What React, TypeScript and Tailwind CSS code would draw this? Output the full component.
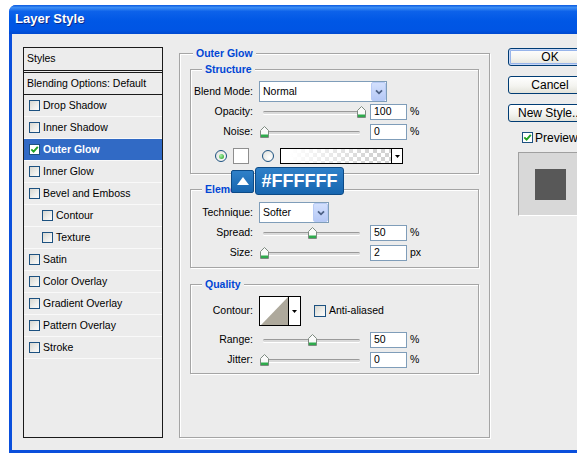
import type { ReactNode } from "react";

const ITEMS: Array<{ label: string; indent?: boolean; checked?: boolean; selected?: boolean }> = [
  { label: "Drop Shadow" },
  { label: "Inner Shadow" },
  { label: "Outer Glow", checked: true, selected: true },
  { label: "Inner Glow" },
  { label: "Bevel and Emboss" },
  { label: "Contour", indent: true },
  { label: "Texture", indent: true },
  { label: "Satin" },
  { label: "Color Overlay" },
  { label: "Gradient Overlay" },
  { label: "Pattern Overlay" },
  { label: "Stroke" },
];

function CheckBox({ checked, size = "h-[11px] w-[11px]" }: { checked?: boolean; size?: string }) {
  return (
    <span
      className={`flex flex-none items-center justify-center border border-[#1c5180] ${size} ${
        checked ? "bg-white" : "bg-[linear-gradient(135deg,#d6d6d0,#efefec_60%,#fbfbfb)]"
      }`}
    >
      {checked && (
        <svg viewBox="0 0 9 9" className="h-[9px] w-[9px]">
          <path d="M1.3 4.3 L3.6 6.6 L7.8 1.8" stroke="#21a121" strokeWidth="1.9" fill="none" />
        </svg>
      )}
    </span>
  );
}

function Radio({ on }: { on?: boolean }) {
  return (
    <span className="flex h-[12px] w-[12px] flex-none items-center justify-center rounded-full border border-[#1c5180] bg-[radial-gradient(circle_at_65%_65%,#ffffff,#dedeD8)]">
      {on && <span className="h-[5px] w-[5px] rounded-full bg-[radial-gradient(circle_at_35%_35%,#a8f0a8,#1e9e1e)]" />}
    </span>
  );
}

function Slider({ value }: { value: number }) {
  return (
    <div className="relative h-[16px] w-[107px] flex-none">
      <div className="absolute left-[4px] right-[6px] top-[7px] h-[3px] rounded-[2px] border-t border-[#9a9a9a] bg-[#dadada] shadow-[0_1px_0_#fff]" />
      <svg
        viewBox="0 0 9 12"
        className="absolute top-[2px] h-[12px] w-[9px]"
        style={{ left: 0.5 + value * 0.97 }}
      >
        <path d="M0.5 4.5 L4.5 0.5 L8.5 4.5 V11.5 H0.5 Z" fill="#fafafa" stroke="#7d8a80" />
        <rect x="1" y="8.5" width="7" height="2.5" fill="#2eab4c" />
      </svg>
    </div>
  );
}

function Num({ value, unit }: { value: string; unit?: string }) {
  return (
    <>
      <div className="ml-[4px] flex h-[16px] w-[37px] flex-none items-center border border-[#7f9db9] bg-white pl-[3px]">
        {value}
      </div>
      {unit && <span className="ml-[3px]">{unit}</span>}
    </>
  );
}

function DownTri() {
  return (
    <svg width="5" height="3" viewBox="0 0 5 3">
      <path d="M0 0 H5 L2.5 3 Z" fill="#000" />
    </svg>
  );
}

function Select({ value, width }: { value: string; width: string }) {
  return (
    <div className={`flex h-[21px] flex-none items-center justify-between border border-[#7f9db9] bg-white pl-[3px] ${width}`}>
      <span>{value}</span>
      <span className="flex h-[19px] w-[15px] items-center justify-center rounded-[2px] border border-[#b8cbf5] bg-[linear-gradient(#d3e0fd,#b6c9f6)]">
        <svg width="8" height="6" viewBox="0 0 8 6">
          <path d="M1 1.3 L4 4.3 L7 1.3" stroke="#4d6185" strokeWidth="1.8" fill="none" />
        </svg>
      </span>
    </div>
  );
}

function Row({ label, className, children }: { label: string; className: string; children: ReactNode }) {
  return (
    <div className={`flex items-center ${className}`}>
      <span className="w-[62px] flex-none text-right">{label}</span>
      <div className="ml-[6px] flex items-center">{children}</div>
    </div>
  );
}

function Group({ title, className, children }: { title: string; className: string; children: ReactNode }) {
  return (
    <fieldset
      className={`ml-[10px] w-[289px] border border-[#a5a5a5] shadow-[inset_1px_1px_0_#fff,1px_1px_0_#fff] ${className}`}
    >
      <legend className="ml-[11px] bg-[#ececec] px-[3px] text-[10.5px] font-bold leading-[13px] text-[#0046d5]">
        {title}
      </legend>
      {children}
    </fieldset>
  );
}

function Button({ children, isDefault }: { children: ReactNode; isDefault?: boolean }) {
  return (
    <div
      className={`flex h-[18px] w-[84px] items-center justify-center rounded-[3px] border border-[#003c74] bg-[linear-gradient(#ffffff,#f4f4f0_55%,#e2e2da)] text-[12px] leading-none ${
        isDefault ? "shadow-[inset_0_0_0_1px_#c6d7f7,inset_0_0_0_2px_#97b4ea]" : ""
      }`}
    >
      {children}
    </div>
  );
}

export default function App() {
  return (
    <div className="relative h-[460px] w-[577px] overflow-hidden bg-white font-['Liberation_Sans',Arial,sans-serif] text-[10.5px] text-black">
      <div className="ml-[9px] mt-[5px] flex h-[448px] w-[620px] flex-col overflow-hidden rounded-tl-[7px] bg-[#0a4fdc]">
        <div className="flex h-[29px] flex-none items-center bg-[linear-gradient(to_bottom,#0a5ae0_0%,#3d8ef4_9%,#0d62ea_22%,#0057e5_55%,#0055e4_85%,#0049d0_100%)] pb-[1px] pl-[6px] text-[13px] font-bold text-white [text-shadow:1px_1px_0_#0a2a8a]">
          Layer Style
        </div>

        <div className="mb-[3px] ml-[3px] flex flex-1 items-start bg-[#ececec] pl-[11px]">
          {/* styles list */}
          <div className="mt-[13px] h-[391px] w-[140px] flex-none border border-[#1a1a1a]">
            <div className="flex h-[25px] items-center border-b-[3px] border-double border-[#1a1a1a] pl-[3px]">
              Styles
            </div>
            <div className="flex h-[22px] items-center border-b border-[#1a1a1a] pl-[3px]">
              Blending Options: Default
            </div>
            {ITEMS.map((it) => (
              <div
                key={it.label}
                className={`flex h-[22px] items-center gap-[3px] border-b border-[#f9f9f9] ${
                  it.indent ? "pl-[18px]" : "pl-[5px]"
                } ${it.selected ? "bg-[#316ac5] font-bold text-white" : ""}`}
              >
                <CheckBox checked={it.checked} />
                <span>{it.label}</span>
              </div>
            ))}
          </div>

          {/* settings */}
          <fieldset className="ml-[16px] mt-[13px] h-[391px] w-[311px] flex-none border border-[#a5a5a5] shadow-[inset_1px_1px_0_#fff,1px_1px_0_#fff]">
            <legend className="ml-[13px] bg-[#ececec] px-[3px] text-[10.5px] font-bold leading-[13px] text-[#0046d5]">
              Outer Glow
            </legend>

            <Group title="Structure" className="mt-[3px] pb-[9px]">
              <Row label="Blend Mode:" className="mt-[5px] h-[21px]">
                <Select value="Normal" width="w-[128px]" />
              </Row>
              <Row label="Opacity:" className="mt-[2px] h-[16px]">
                <Slider value={100} />
                <Num value="100" unit="%" />
              </Row>
              <Row label="Noise:" className="mt-[4px] h-[16px]">
                <Slider value={0} />
                <Num value="0" unit="%" />
              </Row>
              <div className="mt-[8px] flex h-[16px] items-center pl-[24px]">
                <Radio on />
                <span className="ml-[6px] h-[16px] w-[16px] border border-[#8e8e8e] bg-white" />
                <span className="ml-[13px]">
                  <Radio />
                </span>
                <div className="ml-[6px] flex h-[16px] w-[123px] border border-black">
                  <div className="flex-1 [background:linear-gradient(to_right,#fff_8%,rgba(255,255,255,0)_85%),repeating-conic-gradient(#d2d2d2_0_25%,#fff_0_50%)_0_0/8px_8px]" />
                  <div className="flex w-[11px] items-center justify-center border-l border-black bg-white">
                    <DownTri />
                  </div>
                </div>
              </div>
            </Group>

            <Group title="Elements" className="mt-[9px] pb-[6px]">
              <Row label="Technique:" className="mt-[6px] h-[21px]">
                <Select value="Softer" width="w-[70px]" />
              </Row>
              <Row label="Spread:" className="mt-[2px] h-[16px]">
                <Slider value={50} />
                <Num value="50" unit="%" />
              </Row>
              <Row label="Size:" className="mt-[4px] h-[16px]">
                <Slider value={0} />
                <Num value="2" unit="px" />
              </Row>
            </Group>

            <Group title="Quality" className="mt-[10px] pb-[5px]">
              <Row label="Contour:" className="mt-[5px] h-[30px]">
                <div className="flex h-[30px] w-[42px] flex-none border border-black bg-white">
                  <svg viewBox="0 0 28 28" preserveAspectRatio="none" className="h-full w-[28px]">
                    <path d="M1 28 L28 0 V28 Z" fill="#aea99c" />
                  </svg>
                  <div className="flex w-[12px] items-center justify-center border-l border-black">
                    <DownTri />
                  </div>
                </div>
                <span className="ml-[13px]">
                  <CheckBox size="h-[12px] w-[12px]" />
                </span>
                <span className="ml-[3px]">Anti-aliased</span>
              </Row>
              <Row label="Range:" className="mt-[6px] h-[16px]">
                <Slider value={50} />
                <Num value="50" unit="%" />
              </Row>
              <Row label="Jitter:" className="mt-[4px] h-[16px]">
                <Slider value={0} />
                <Num value="0" unit="%" />
              </Row>
            </Group>
          </fieldset>

          {/* buttons */}
          <div className="ml-[18px] mt-[14px] flex flex-none flex-col">
            <Button isDefault>OK</Button>
            <div className="mt-[10px]">
              <Button>Cancel</Button>
            </div>
            <div className="mt-[10px]">
              <Button>New Style...</Button>
            </div>
            <div className="mt-[9px] flex h-[13px] items-center gap-[2px] pl-[14px] text-[12px]">
              <CheckBox checked />
              <span>Preview</span>
            </div>
            <div className="ml-[10px] mt-[8px] h-[64px] w-[66px] border border-b-white border-l-[#a0a0a0] border-r-white border-t-[#a0a0a0] bg-[#d8d8d8] pl-[16px] pt-[16px]">
              <div className="h-[31px] w-[31px] bg-[#585858]" />
            </div>
          </div>
        </div>
      </div>

      {/* color tooltip */}
      <div className="absolute left-[231px] top-[167px] flex items-center gap-[1px]">
        <div className="flex h-[23px] w-[23px] items-center justify-center rounded-[2px] border border-[#0c4a86] bg-[linear-gradient(#2f80c8,#1766b0)]">
          <svg width="12" height="8" viewBox="0 0 12 8">
            <path d="M0 8 L6 0 L12 8 Z" fill="#fff" />
          </svg>
        </div>
        <div className="flex h-[28px] w-[89px] items-center justify-center rounded-[3px] border border-[#0c4a86] bg-[linear-gradient(#2f80c8,#1766b0)] text-[18px] font-bold text-white">
          #FFFFFF
        </div>
      </div>
    </div>
  );
}
